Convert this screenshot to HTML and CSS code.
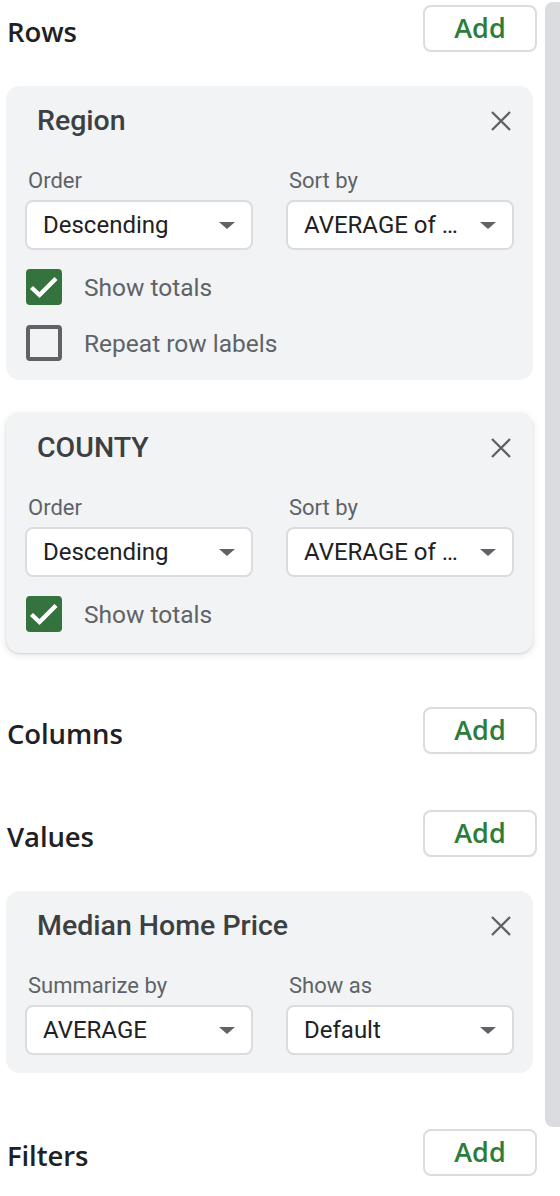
FILE: index.html
```html
<!DOCTYPE html>
<html lang="en">
<head>
<meta charset="utf-8">
<title>Pivot table editor</title>
<link rel="stylesheet" href="styles.css">
</head>
<body>
<div class="panel">
  <div class="section-head">
    <h2 class="section-title">Rows</h2>
    <button class="add-btn">Add</button>
  </div>

  <div class="card card-rows-first">
    <div class="card-head">
      <span class="card-title">Region</span>
      <svg class="close" width="20" height="20" viewBox="0 0 20 20"><path d="M1 1L19 19M19 1L1 19" stroke="#5f6368" stroke-width="2.3" fill="none"/></svg>
    </div>
    <div class="fields">
      <div class="field">
        <div class="field-label">Order</div>
        <div class="select"><span class="select-text">Descending</span><span class="caret"></span></div>
      </div>
      <div class="field">
        <div class="field-label">Sort by</div>
        <div class="select"><span class="select-text">AVERAGE of …</span><span class="caret"></span></div>
      </div>
    </div>
    <div class="check-row">
      <span class="checkbox checked"><svg width="36" height="36" viewBox="0 0 36 36"><path d="M5.5 18.5L13.5 26L30 9.5" stroke="#fff" stroke-width="4.4" fill="none"/></svg></span>
      <span class="check-label">Show totals</span>
    </div>
    <div class="check-row">
      <span class="checkbox"></span>
      <span class="check-label">Repeat row labels</span>
    </div>
  </div>

  <div class="card card-raised">
    <div class="card-head">
      <span class="card-title">COUNTY</span>
      <svg class="close" width="20" height="20" viewBox="0 0 20 20"><path d="M1 1L19 19M19 1L1 19" stroke="#5f6368" stroke-width="2.3" fill="none"/></svg>
    </div>
    <div class="fields">
      <div class="field">
        <div class="field-label">Order</div>
        <div class="select"><span class="select-text">Descending</span><span class="caret"></span></div>
      </div>
      <div class="field">
        <div class="field-label">Sort by</div>
        <div class="select"><span class="select-text">AVERAGE of …</span><span class="caret"></span></div>
      </div>
    </div>
    <div class="check-row">
      <span class="checkbox checked"><svg width="36" height="36" viewBox="0 0 36 36"><path d="M5.5 18.5L13.5 26L30 9.5" stroke="#fff" stroke-width="4.4" fill="none"/></svg></span>
      <span class="check-label">Show totals</span>
    </div>
  </div>

  <div class="section-head section-columns">
    <h2 class="section-title">Columns</h2>
    <button class="add-btn">Add</button>
  </div>

  <div class="section-head section-values">
    <h2 class="section-title">Values</h2>
    <button class="add-btn">Add</button>
  </div>

  <div class="card card-values">
    <div class="card-head">
      <span class="card-title">Median Home Price</span>
      <svg class="close" width="20" height="20" viewBox="0 0 20 20"><path d="M1 1L19 19M19 1L1 19" stroke="#5f6368" stroke-width="2.3" fill="none"/></svg>
    </div>
    <div class="fields">
      <div class="field">
        <div class="field-label">Summarize by</div>
        <div class="select"><span class="select-text">AVERAGE</span><span class="caret"></span></div>
      </div>
      <div class="field">
        <div class="field-label">Show as</div>
        <div class="select"><span class="select-text">Default</span><span class="caret"></span></div>
      </div>
    </div>
  </div>

  <div class="section-head section-filters">
    <h2 class="section-title">Filters</h2>
    <button class="add-btn">Add</button>
  </div>
</div>
<div class="scrollbar"></div>
</body>
</html>
```

FILE: styles.css
```css
html, body {
  margin: 0;
  padding: 0;
  background: #ffffff;
}

body {
  width: 560px;
  height: 1196px;
  overflow: hidden;
  font-family: Roboto, "Liberation Sans", sans-serif;
}

.panel {
  padding: 5px 23px 0 6px;
}

.section-head {
  display: flex;
  align-items: center;
  justify-content: space-between;
  height: 47px;
}

.section-title {
  margin: 0;
  padding-left: 1px;
  font-family: "Open Sans", sans-serif;
  font-weight: 600;
  font-size: 27.5px;
  letter-spacing: -0.1px;
  color: #202124;
  line-height: 47px;
  position: relative;
  top: 3px;
}

.add-btn {
  box-sizing: border-box;
  width: 114px;
  height: 47px;
  background: #fff;
  border: 2px solid #dadce0;
  border-radius: 8px;
  font-family: "Open Sans", sans-serif;
  font-weight: 600;
  font-size: 27px;
  color: #2d7d3a;
  padding: 0 0 2px 0;
  margin: 0;
}

.card {
  background: #f1f3f4;
  border-radius: 14px;
  margin-right: 4px;
  padding: 20px 19px 19px 19px;
}

.card-rows-first {
  margin-top: 34px;
}

.card-raised {
  margin-top: 33px;
  padding-bottom: 21px;
  box-shadow: 0 1px 2px rgba(60, 64, 67, 0.18), 0 2px 6px 2px rgba(60, 64, 67, 0.08);
}

.card-values {
  margin-top: 34px;
  padding-bottom: 18px;
}

.section-columns {
  margin-top: 54px;
}

.section-values {
  margin-top: 56px;
}

.section-filters {
  margin-top: 56px;
}

.card-head {
  display: flex;
  align-items: center;
  justify-content: space-between;
  height: 30px;
  padding-left: 12px;
  padding-right: 3px;
}

.card-title {
  font-family: Roboto, sans-serif;
  font-weight: 500;
  font-size: 28.5px;
  color: #3c4043;
  line-height: 30px;
}

.close {
  display: block;
}

.fields {
  display: grid;
  grid-template-columns: 1fr 1fr;
  column-gap: 33px;
  margin-top: 33px;
}

.field-label {
  font-size: 22px;
  line-height: 24px;
  color: #5f6368;
  padding-left: 3px;
  margin-bottom: 7px;
}

.select {
  box-sizing: border-box;
  height: 50px;
  background: #fff;
  border: 2px solid #dadce0;
  border-radius: 8px;
  display: flex;
  align-items: center;
  justify-content: space-between;
  padding: 0 16px 0 16px;
}

.select-text {
  font-size: 24px;
  color: #202124;
  white-space: nowrap;
}

.caret {
  width: 0;
  height: 0;
  border-left: 8px solid transparent;
  border-right: 8px solid transparent;
  border-top: 7px solid #5f6368;
}

.check-row {
  display: flex;
  align-items: center;
  gap: 22px;
  height: 36px;
  margin-top: 19px;
  padding-left: 1px;
}

.check-row + .check-row {
  margin-top: 20px;
}

.checkbox {
  box-sizing: border-box;
  width: 36px;
  height: 36px;
  border: 4px solid #5f6368;
  border-radius: 4px;
  flex: none;
  position: relative;
}

.checkbox.checked {
  border: none;
  background: #34733d;
}

.checkbox svg {
  display: block;
}

.check-label {
  font-size: 24.5px;
  color: #5f6368;
}

.scrollbar {
  position: fixed;
  top: 2px;
  right: 0;
  width: 15px;
  height: 1125px;
  background: #dadce0;
  border-radius: 8px 0 0 8px;
}
```
